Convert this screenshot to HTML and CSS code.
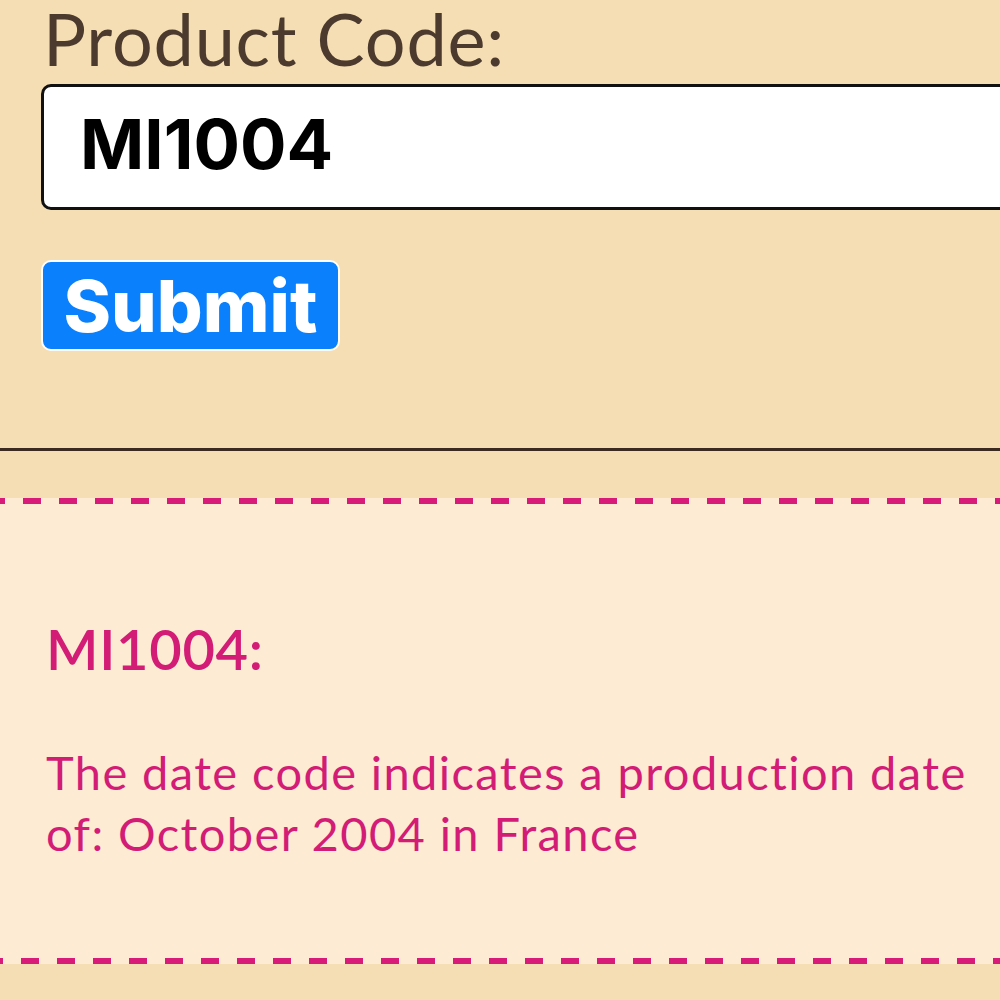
FILE: index.html
```html
<!DOCTYPE html>
<html lang="en">
<head>
    <meta charset="UTF-8">
    <meta name="viewport" content="width=device-width, initial-scale=1.0">
    <title>Date Code Lookup</title>
    <link rel="stylesheet" href="styles.css">
</head>
<body>

    <form class="lookup">
        <label class="lookupLabel" for="codeId">Product Code:</label>
        <input id="codeId" class="lookupInput" type="text" value="MI1004">
        <button class="lookupButton" type="button">Submit</button>
    </form>

    <hr class="divider">

    <div class="result">
        <h2 class="resultCode">MI1004:</h2>
        <p class="resultText">The date code indicates a production date of: October 2004 in France</p>
    </div>

</body>
</html>
```

FILE: styles.css
```css
html, body {
    overflow:           hidden;
}

body {
    margin:             0;
    background-color:   #f5deb3;
    font-family:        Lato, "Open Sans", sans-serif;
}

.lookup {
    padding:            2px 0 0 41px;
    height:             448px;
    box-sizing:         border-box;
}

.lookupLabel {
    display:            block;
    margin-left:        2px;
    font-size:          72px;
    line-height:        72px;
    letter-spacing:     0.8px;
    color:              #4b3a2d;
}

.lookupInput {
    display:            block;
    box-sizing:         border-box;
    margin-top:         10px;
    width:              1000px;
    height:             126px;
    padding:            0 0 6px 36px;
    border:             3px solid #111;
    border-radius:      10px;
    background:         #fff;
    font-family:        Inter, sans-serif;
    font-weight:        700;
    font-size:          69px;
    color:              #000;
    outline:            none;
}

.lookupButton {
    display:            block;
    box-sizing:         border-box;
    margin-top:         50px;
    width:              299px;
    height:             91px;
    padding:            0;
    border:             2px solid #fff;
    border-radius:      10px;
    background-color:   #0a80fd;
    color:              #fff;
    font-family:        Inter, sans-serif;
    font-weight:        800;
    font-size:          72px;
    line-height:        1;
}

.divider {
    margin:             0;
    border:             none;
    height:             3px;
    background-color:   #3b2a20;
}

/* dashes drawn as gradients so the dash and gap lengths match */
.result {
    margin-top:         47px;
    padding:            0 10px 0 46px;
    height:             466px;
    box-sizing:         border-box;
    background:
        linear-gradient(to right, #d81b78 18px, transparent 0) 23px 0 / 36px 6px repeat-x,
        linear-gradient(to right, #d81b78 18px, transparent 0) 21px 100% / 36px 6px repeat-x,
        #fdebd3;
    color:              #d31c76;
    overflow:           hidden;
}

.resultCode {
    margin:             0;
    padding-top:        123px;
    font-size:          56px;
    font-weight:        600;
    line-height:        1;
    letter-spacing:     0.7px;
}

.resultText {
    margin:             65px 0 0;
    font-size:          47px;
    line-height:        61px;
    letter-spacing:     1.4px;
}
```
